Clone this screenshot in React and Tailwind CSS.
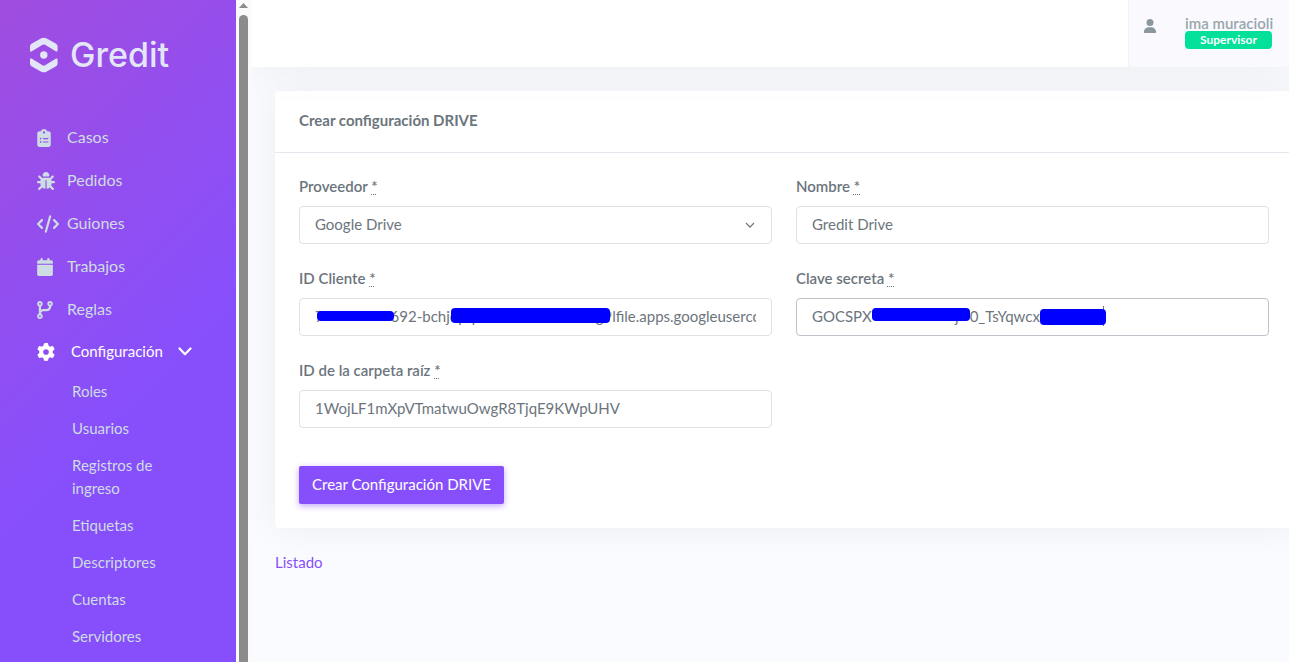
import React, { useState } from 'react'
import { FaBug, FaCalendar, FaClipboardList, FaCode, FaCodeBranch, FaGear, FaUser } from 'react-icons/fa6'

const menuItems = [
  { label: 'Casos', icon: FaClipboardList, size: 'w-[14px] h-[18px]' },
  { label: 'Pedidos', icon: FaBug, size: 'w-[18px] h-[18px]' },
  { label: 'Guiones', icon: FaCode, size: 'w-[22px] h-[18px]' },
  { label: 'Trabajos', icon: FaCalendar, size: 'w-[16px] h-[18px]' },
  { label: 'Reglas', icon: FaCodeBranch, size: 'w-[16px] h-[18px]' }
]

const configItems = [
  'Roles',
  'Usuarios',
  'Registros de ingreso',
  'Etiquetas',
  'Descriptores',
  'Cuentas',
  'Servidores'
]

const inputClass =
  'block w-full h-[38px] px-[15px] pb-[2px] bg-white border rounded text-[15px] text-[#6c757d] focus:outline-none focus:border-[#bfc3c9]'

const Logo = () => (
  <a href="#" className="flex items-center gap-[11px] pl-[29px] pt-[34px] h-[75px] text-[#e3e6f7]">
    <svg className="w-[30px] h-[36px] shrink-0" viewBox="0 0 30 36" fill="currentColor" stroke="currentColor" strokeWidth="2" strokeLinejoin="round">
      <path d="M2 9.500Q2 8.300 3 7.600L12.300 2.400Q14.800 1 17.300 2.400L26.600 7.600Q27.600 8.300 27.600 9.500V13.600L16.600 7Q14.800 6 13 7L2 13.600Z" />
      <path d="M2 26.500Q2 27.700 3 28.400L12.300 33.600Q14.800 35 17.300 33.600L26.600 28.400Q27.600 27.700 27.600 26.500V22.400L16.600 29Q14.800 30 13 29L2 22.400Z" />
      <circle cx="14.800" cy="18" r="2.700" />
    </svg>
    <span className="font-['Inter',sans-serif] font-medium text-[34px] leading-none">Gredit</span>
  </a>
)

const Sidebar = () => {
  const [open, setOpen] = useState(true)

  return (
    <aside className="w-[251px] shrink-0 flex overflow-hidden bg-[#fafafa]">
      <div className="grow bg-[linear-gradient(135deg,#a04ddf_0%,#874ffc_60%)] text-[#cedce4]">
        <Logo />
        <nav className="pt-[40px]">
          <ul>
            {menuItems.map(({ label, icon: Icon, size }) => (
              <li key={label}>
                <a href="#" className="flex items-center h-[43px] pl-[37px] text-[16px] hover:text-white">
                  <span className="w-[30px] pt-[2px]">
                    <Icon className={size} />
                  </span>
                  {label}
                </a>
              </li>
            ))}
            <li>
              <button
                type="button"
                onClick={() => setOpen(!open)}
                aria-expanded={open}
                className="flex items-center w-full h-[43px] pl-[37px] text-[15px] text-white"
              >
                <span className="w-[34px]">
                  <FaGear className="w-[18px] h-[18px]" />
                </span>
                Configuración
                <svg className="w-[14px] h-[9px] ml-[15px]" viewBox="0 0 14 9" fill="none" stroke="currentColor" strokeWidth="2.200" strokeLinecap="round" strokeLinejoin="round">
                  <path d="M1.500 1.500L7 7.200L12.500 1.500" />
                </svg>
              </button>
              {open && (
                <ul>
                  {configItems.map(item => (
                    <li key={item}>
                      <a href="#" className="block py-[7px] pl-[72px] pr-[60px] text-[15px] leading-[23px] hover:text-white">
                        {item}
                      </a>
                    </li>
                  ))}
                </ul>
              )}
            </li>
          </ul>
        </nav>
      </div>
      {/* Scroll bar */}
      <div className="w-[15px] shrink-0 flex flex-col items-center">
        <svg className="w-[9px] h-[5px] mt-[3px]" viewBox="0 0 9 5" fill="#8b8b8b">
          <path d="M4.500 0L9 5H0Z" />
        </svg>
        <div className="w-[9px] grow mt-[7px] rounded-t-full bg-[#8b8b8b]" />
      </div>
    </aside>
  )
}

const Topbar = () => (
  <header className="relative h-[67px] flex justify-end bg-white shadow-[0_0_35px_0_rgba(154,161,171,0.15)]">
    <div className="flex pl-[14px] pr-[17px] bg-[#fafafe] border-l border-[#f1f3fa]">
      <FaUser className="w-[14px] h-[14px] mt-[19px] mr-[28px] text-[#8a979f]" />
      <div className="w-[87px] pt-[15px]">
        <p className="text-[15px] leading-4 font-semibold text-[#98a6ad] text-center whitespace-nowrap">ima muracioli</p>
        <p className="h-[18px] rounded bg-[#02e09a] text-white text-[12px] leading-[18px] font-bold text-center">Supervisor</p>
      </div>
    </div>
  </header>
)

const Field = ({ id, label, children }) => (
  <div>
    <label htmlFor={id} className="block mb-[10px] text-[15px] leading-5 font-semibold text-[#6c757d]">
      {label}{' '}
      <abbr title="requerido" className="font-semibold underline decoration-dotted decoration-1 underline-offset-2">*</abbr>
    </label>
    <div className="relative">{children}</div>
  </div>
)

const App = () => {
  const [form, setForm] = useState({
    provider: 'Google Drive',
    name: 'Gredit Drive',
    clientId: '7------------692-bchjopqa0000000000000g9lfile.apps.googleusercontent.com',
    secret: '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0000',
    folderId: '1WojLF1mXpVTmatwuOwgR8TjqE9KWpUHV'
  })

  const handleChange = (e) => {
    setForm(prev => ({ ...prev, [e.target.name]: e.target.value }))
  }

  return (
    <div className="flex h-screen overflow-hidden bg-[#fafbfe] font-['Lato','Open_Sans',sans-serif] text-[#6c757d]">
      <Sidebar />
      <div className="grow min-w-0 overflow-hidden">
        <Topbar />
        <main className="pt-6 pl-6">
          <div className="-mr-1 rounded bg-white shadow-[0_0_35px_0_rgba(154,161,171,0.15)]">
            <h4 className="px-6 pt-[19px] pb-[21px] text-[15px] leading-[21px] font-bold border-b border-[#e3e8ee]">
              Crear configuración DRIVE
            </h4>
            <form onSubmit={(e) => e.preventDefault()} className="px-6 pt-[23px] pb-6">
              <div className="grid grid-cols-2 gap-6">
                <Field id="provider" label="Proveedor">
                  <select id="provider" name="provider" value={form.provider} onChange={handleChange} className={`${inputClass} border-[#dee2e6] appearance-none`}>
                    <option>Google Drive</option>
                  </select>
                  <svg className="absolute right-[17px] top-[16px] w-[10px] h-[7px] pointer-events-none" viewBox="0 0 10 7" fill="none" stroke="#6c757d" strokeWidth="1.200">
                    <path d="M1 1L5 5.200L9 1" />
                  </svg>
                </Field>
                <Field id="name" label="Nombre">
                  <input id="name" name="name" type="text" value={form.name} onChange={handleChange} className={`${inputClass} border-[#dee2e6]`} />
                </Field>
                <Field id="clientId" label="ID Cliente">
                  <input id="clientId" name="clientId" type="text" value={form.clientId} onChange={handleChange} className={`${inputClass} border-[#dee2e6]`} />
                  <span className="absolute left-[18px] top-[13px] w-[77px] h-[10px] rounded bg-[#0000ff]" />
                  <span className="absolute left-[152px] top-[10px] w-[159px] h-[15px] rounded bg-[#0000ff]" />
                </Field>
                <Field id="secret" label="Clave secreta">
                  <input id="secret" name="secret" type="text" value={form.secret} onChange={handleChange} className={`${inputClass} border-[#bfc3c9]`} />
                  <span className="absolute left-[307px] top-[8px] w-px h-[20px] bg-[#6c757d]" />
                  <span className="absolute left-[76px] top-[10px] w-[98px] h-[13px] rounded bg-[#0000ff]" />
                  <span className="absolute left-[244px] top-[11px] w-[66px] h-[16px] rounded bg-[#0000ff]" />
                </Field>
                <Field id="folderId" label="ID de la carpeta raíz">
                  <input id="folderId" name="folderId" type="text" value={form.folderId} onChange={handleChange} className={`${inputClass} border-[#dee2e6]`} />
                </Field>
              </div>
              <button
                type="submit"
                className="mt-[38px] h-[38px] px-[13px] pb-[2px] rounded-xs bg-[#874ffc] text-white text-[15px] shadow-[0_2px_6px_0_rgba(135,79,252,0.5)]"
              >
                Crear Configuración DRIVE
              </button>
            </form>
          </div>
          <a href="#" className="inline-block mt-[23px] text-[15px] leading-[22px] text-[#874ffc]">Listado</a>
        </main>
      </div>
    </div>
  )
}

export default App
